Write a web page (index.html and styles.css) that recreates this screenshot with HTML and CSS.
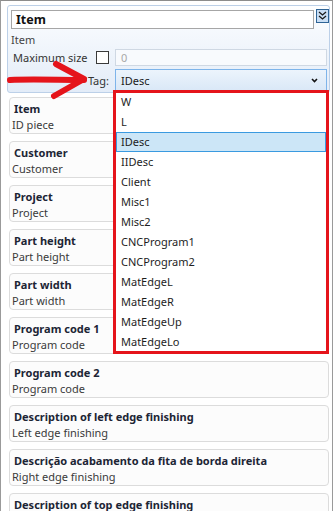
FILE: index.html
```html
<!DOCTYPE html>
<html lang="en">
<head>
  <meta charset="UTF-8" />
  <meta name="viewport" content="width=device-width, initial-scale=1.0"/>
  <title>Item properties</title>
  <link rel="stylesheet" href="styles.css">
</head>
<body>
  <div class="window">
    <div class="props">
      <div class="name-row">
        <div class="name-input">Item</div>
        <button class="expand" type="button">
          <svg width="9" height="10" viewBox="0 0 9 10">
            <polyline points="1,1 4.5,4 8,1" />
            <polyline points="1,5 4.5,8 8,5" />
          </svg>
        </button>
      </div>

      <div class="caption">Item</div>

      <div class="field-row">
        <div class="field-label">
          <span>Maximum size</span>
          <span class="check"></span>
        </div>
        <div class="size-input">0</div>
      </div>

      <div class="field-row tag-row">
        <div class="field-label right">Tag:</div>
        <div class="combo">
          <span>IDesc</span>
          <svg width="7" height="5" viewBox="0 0 7 5">
            <polyline points="1,1 3.5,3.5 6,1" />
          </svg>
        </div>
      </div>
    </div>

    <div class="fields">
      <div class="card"><div class="card-title">Item</div><div class="card-sub">ID piece</div></div>
      <div class="card"><div class="card-title">Customer</div><div class="card-sub">Customer</div></div>
      <div class="card"><div class="card-title">Project</div><div class="card-sub">Project</div></div>
      <div class="card"><div class="card-title">Part height</div><div class="card-sub">Part height</div></div>
      <div class="card"><div class="card-title">Part width</div><div class="card-sub">Part width</div></div>
      <div class="card"><div class="card-title">Program code 1</div><div class="card-sub">Program code</div></div>
      <div class="card"><div class="card-title">Program code 2</div><div class="card-sub">Program code</div></div>
      <div class="card"><div class="card-title">Description of left edge finishing</div><div class="card-sub">Left edge finishing</div></div>
      <div class="card"><div class="card-title">Descrição acabamento da fita de borda direita</div><div class="card-sub">Right edge finishing</div></div>
      <div class="card"><div class="card-title">Description of top edge finishing</div></div>
    </div>

    <svg class="arrow" width="100" height="50" viewBox="0 55 100 50">
      <path d="M10 80 C 30 79, 60 80, 84 80" />
      <path d="M56 64 L 84 79 L 54 96" />
    </svg>

    <div class="dropdown">
      <ul class="options">
        <li>W</li>
        <li>L</li>
        <li class="selected">IDesc</li>
        <li>IIDesc</li>
        <li>Client</li>
        <li>Misc1</li>
        <li>Misc2</li>
        <li>CNCProgram1</li>
        <li>CNCProgram2</li>
        <li>MatEdgeL</li>
        <li>MatEdgeR</li>
        <li>MatEdgeUp</li>
        <li>MatEdgeLo</li>
      </ul>
    </div>
  </div>
</body>
</html>
```

FILE: styles.css
```css
body {
  margin: 0;
  font-family: "Noto Sans", "DejaVu Sans", sans-serif;
  font-size: 11px;
  color: #2a2a2a;
  background: #fff;
}

.window {
  position: relative;
  width: 331px;
  height: 510px;
  border-top: 1px solid #8c8c8c;
  border-left: 1px solid #9a9a9a;
  border-right: 1px solid #9a9a9a;
  overflow: hidden;
  background: #fff;
}

/* top property panel */
.props {
  margin: 4px 2px 0 6px;
  padding: 3px 0 1px;
  border: 1px solid #bcd0e8;
  border-radius: 3px;
  background: linear-gradient(#fdfeff, #e3ecf8);
}

.name-row {
  display: flex;
  align-items: flex-start;
  gap: 2px;
}

.name-input {
  margin: 1px 0 0 3px;
  width: 304px;
  height: 19px;
  box-sizing: border-box;
  padding: 0 4px;
  border: 1px solid #a6a6a6;
  background: #fff;
  font-size: 12.5px;
  font-weight: bold;
  line-height: 17px;
  color: #111;
}

.expand {
  width: 13px;
  height: 14px;
  padding: 0;
  border: 1px solid #2e6496;
  background: #c9def4;
  display: flex;
  align-items: center;
  justify-content: center;
}

.expand polyline {
  fill: none;
  stroke: #1a1a1a;
  stroke-width: 1.3;
}

.caption {
  margin: 4px 0 0 3px;
  line-height: 14px;
  color: #444;
}

.field-row {
  display: flex;
  align-items: center;
  margin-top: 2px;
}

.field-label {
  flex: 1;
  display: flex;
  align-items: center;
  justify-content: space-between;
  padding: 0 6px 0 5px;
  color: #333;
}

.field-label.right {
  justify-content: flex-end;
}

.check {
  width: 11px;
  height: 11px;
  border: 1px solid #3a3a3a;
  background: #fff;
}

.size-input {
  width: 212px;
  height: 17px;
  box-sizing: border-box;
  margin-right: 2px;
  padding: 0 5px;
  border: 1px solid #cfd8e3;
  background: #f8fafd;
  color: #a8a8a8;
  line-height: 15px;
}

.tag-row {
  margin-top: 3px;
}

.combo {
  width: 212px;
  height: 22px;
  box-sizing: border-box;
  margin-right: 2px;
  padding: 0 8px 0 5px;
  border: 1px solid #7eb4ea;
  background: linear-gradient(#ecf4fc, #dae8f7);
  display: flex;
  align-items: center;
  justify-content: space-between;
  color: #1a1a1a;
}

.combo polyline {
  fill: none;
  stroke: #111;
  stroke-width: 1.6;
}

/* field cards */
.fields {
  display: flex;
  flex-direction: column;
  gap: 7px;
  padding: 4px 3px 0 8px;
}

.card {
  height: 37px;
  box-sizing: border-box;
  padding: 3px 2px 0;
  border: 1px solid #dcdcdc;
  border-radius: 4px;
  background: #fcfcfc;
}

.card-title {
  margin-left: 2px;
  font-weight: bold;
  line-height: 16px;
  color: #1c2535;
}

.card-sub {
  line-height: 16px;
  color: #3a3a3a;
  white-space: nowrap;
}

/* annotation arrow */
.arrow {
  position: absolute;
  left: -1px;
  top: 54px;
}

.arrow path {
  fill: none;
  stroke: #e5141b;
  stroke-width: 6;
  stroke-linecap: round;
  stroke-linejoin: round;
}

/* open tag list */
.dropdown {
  position: absolute;
  left: 112px;
  top: 89px;
  width: 216px;
  height: 264px;
  box-sizing: border-box;
  border: 3px solid #e5141b;
  background: #fff;
  overflow: hidden;
}

.options {
  list-style: none;
  margin: -1px 0 0;
  padding: 0;
}

.options li {
  height: 20px;
  box-sizing: border-box;
  padding-left: 5px;
  line-height: 20px;
  color: #1e1e1e;
}

.options li.selected {
  border: 1px solid #3a9ae0;
  background: #cce6f7;
  padding-left: 4px;
  line-height: 18px;
}
```
